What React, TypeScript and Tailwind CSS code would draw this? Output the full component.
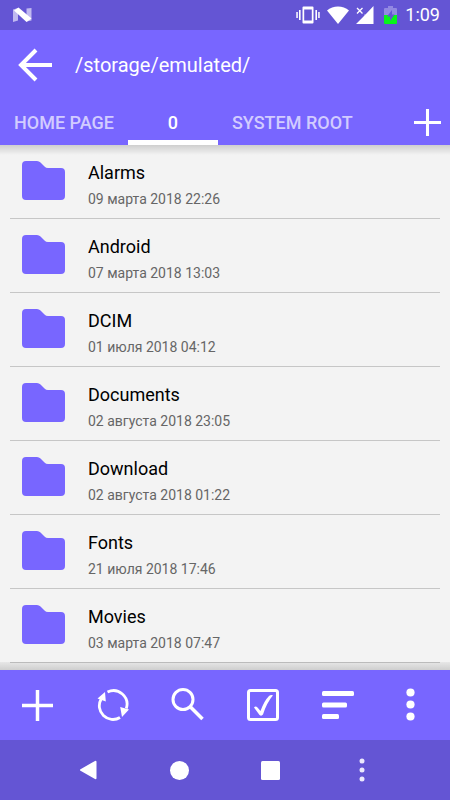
import type { ReactNode } from "react";

const folders = [
  { name: "Alarms", date: "09 марта 2018 22:26" },
  { name: "Android", date: "07 марта 2018 13:03" },
  { name: "DCIM", date: "01 июля 2018 04:12" },
  { name: "Documents", date: "02 августа 2018 23:05" },
  { name: "Download", date: "02 августа 2018 01:22" },
  { name: "Fonts", date: "21 июля 2018 17:46" },
  { name: "Movies", date: "03 марта 2018 07:47" },
];

function StatusBar() {
  return (
    <div className="flex h-[30px] shrink-0 items-center bg-[#6455d4] pr-[10px] pl-[13px] text-white">
      <svg width="19" height="16" viewBox="0 0 19 16">
        <path d="M0 2.500L5 1v12.500L0 15zM13.500 1.500L18.500 1v12.500l-5 1z" fill="#c0b9f0" />
        <path d="M1 3.500L5.500.5 18.500 11.500 13.500 15z" fill="#fff" />
      </svg>
      <div className="ml-auto flex items-center">
        <svg width="24" height="18" viewBox="0 0 24 18" fill="#fff">
          <path d="M7.500 .5h9a1 1 0 0 1 1 1v15a1 1 0 0 1-1 1h-9a1 1 0 0 1-1-1v-15a1 1 0 0 1 1-1zM8.200 3.500v11h7.600v-11z" fillRule="evenodd" />
          <path d="M3 4h1.600v10H3zM0.300 6h1.500v6H0.300zM19.400 4H21v10h-1.600zM22.200 6h1.500v6h-1.500z" />
        </svg>
        <svg className="ml-[6px]" width="24" height="18" viewBox="0 0 24 18">
          <path d="M1 4.500C7-.8 17-.8 23 4.500L12 18z" fill="#fff" />
        </svg>
        <svg className="ml-[6px]" width="18" height="18" viewBox="0 0 18 18">
          <path d="M17.500 0v18H0l8.500-8.500V8.500h1z" fill="#fff" />
          <path d="M1 2l5.500 5.500M6.500 2L1 7.500" stroke="#fff" strokeWidth="1.300" />
        </svg>
        <svg className="ml-[10px]" width="13" height="18" viewBox="0 0 13 18">
          <path d="M4 0h5v2h3a1 1 0 0 1 1 1v7H0V3a1 1 0 0 1 1-1h3z" fill="#9288e2" />
          <path d="M0 9h13v8a1 1 0 0 1-1 1H1a1 1 0 0 1-1-1z" fill="#08f51c" />
          <path d="M8 4L3 10.500h3V15l4.500-6.500H8z" fill="#6455d4" />
        </svg>
        <span className="ml-[8px] text-[18px] leading-[30px]">1:09</span>
      </div>
    </div>
  );
}

function PlusIcon({ size }: { size: number }) {
  return (
    <svg width={size} height={size} viewBox="0 0 32 32">
      <path d="M16 0v32M0 16h32" stroke="#fff" strokeWidth="3.600" />
    </svg>
  );
}

function FolderIcon() {
  return (
    <svg className="shrink-0" width="43" height="39" viewBox="0 0 43 39">
      <path
        d="M4 0h11q2 0 3.500 1.500l4 4Q24 7 26 7h13q4 0 4 4v24q0 4-4 4H4q-4 0-4-4V4Q0 0 4 0z"
        fill="#7866ff"
      />
    </svg>
  );
}

function Tab({ label, active = false }: { label: string; active?: boolean }) {
  return (
    <button
      role="tab"
      aria-selected={active}
      className={
        active
          ? "min-w-[90px] border-b-[5px] border-white px-[14px] pt-[5px] text-white"
          : "border-b-[5px] border-transparent px-[14px] pt-[5px] text-[#d2ccff]"
      }
    >
      {label}
    </button>
  );
}

function ToolButton({ label, children }: { label: string; children: ReactNode }) {
  return (
    <button aria-label={label} className="flex items-center justify-center">
      {children}
    </button>
  );
}

export default function App() {
  return (
    <div className="flex h-screen flex-col bg-[#f3f3f3] font-[Roboto,sans-serif]">
      <StatusBar />

      <header className="shrink-0 bg-[#7866ff]">
        <div className="flex h-[70px] items-center pl-[18px]">
          <button aria-label="Back">
            <svg width="34" height="34" viewBox="0 0 34 34" fill="none" stroke="#fff" strokeWidth="4">
              <path d="M18 2L3 17l15 15M3 17h31" />
            </svg>
          </button>
          <h1 className="ml-[23px] text-[20px] leading-[24px] text-white">/storage/emulated/</h1>
        </div>
        <div className="flex h-[45px] text-[18px] font-medium">
          <div role="tablist" className="flex">
            <Tab label="HOME PAGE" />
            <Tab label="0" active />
            <Tab label="SYSTEM ROOT" />
          </div>
          <button aria-label="Add tab" className="ml-auto pr-[9px]">
            <PlusIcon size={27} />
          </button>
        </div>
      </header>

      <main className="relative min-h-0 flex-1">
        <div className="pointer-events-none absolute inset-x-0 top-0 h-[10px] bg-linear-to-b from-black/15 to-transparent" />
        <ul className="h-full overflow-y-auto px-[10px]">
          {folders.map((folder) => (
            <li key={folder.name} className="border-b border-[#c6c6c6]">
              <a href="#" className="flex h-[73px] items-start pt-[16px] pl-[12px]">
                <FolderIcon />
                <div className="ml-[23px]">
                  <p className="text-[18px] leading-[24px] text-black">{folder.name}</p>
                  <p className="mt-[4px] text-[14px] leading-[20px] text-[#666]">{folder.date}</p>
                </div>
              </a>
            </li>
          ))}
        </ul>
        <div className="pointer-events-none absolute inset-x-0 bottom-0 h-[8px] bg-linear-to-t from-black/15 to-black/5" />
      </main>

      <div className="grid h-[70px] shrink-0 grid-cols-6 bg-[#7866ff]">
        <ToolButton label="New">
          <PlusIcon size={31} />
        </ToolButton>
        <ToolButton label="Refresh">
          <svg width="32" height="32" viewBox="0 0 32 32">
            <g fill="none" stroke="#fff" strokeWidth="2.800">
              <path d="M10.500 3A13.600 13.600 0 0 1 29.300 19.500" />
              <path d="M23 28.500A13.600 13.600 0 0 1 4.200 10" />
            </g>
            <path d="M.5 9.500L8 3l.8 9.500zM32 20.500L25 28l-1.800-10z" fill="#fff" />
          </svg>
        </ToolButton>
        <ToolButton label="Search">
          <svg width="34" height="34" viewBox="0 0 34 34" fill="none" stroke="#fff">
            <circle cx="12" cy="11.500" r="10" strokeWidth="3" />
            <path d="M19 18.500L31.500 31" strokeWidth="3.500" />
          </svg>
        </ToolButton>
        <ToolButton label="Select">
          <svg width="32" height="32" viewBox="0 0 32 32">
            <rect x="1.500" y="1.500" width="29" height="29" rx="2" fill="none" stroke="#fff" strokeWidth="3" />
            <path
              d="M7 18.500q1.500-2 3.500 0l3 3.500Q17 12 22 7q1.500-1.500 4-.8Q19.500 14 16 25.500q-1.500 2-3.500 .5z"
              fill="#fff"
            />
          </svg>
        </ToolButton>
        <ToolButton label="Sort">
          <svg width="32" height="28" viewBox="0 0 32 28" fill="#fff">
            <rect width="32" height="5" rx="1.500" />
            <rect y="11.500" width="25" height="5" rx="1.500" />
            <rect y="23" width="17" height="5" rx="1.500" />
          </svg>
        </ToolButton>
        <ToolButton label="More">
          <svg width="14" height="34" viewBox="0 0 14 34" fill="#fff">
            <circle cx="4.500" cy="4.500" r="4.100" />
            <circle cx="4.500" cy="16.500" r="4.100" />
            <circle cx="4.500" cy="28.500" r="4.100" />
          </svg>
        </ToolButton>
      </div>

      <nav className="grid h-[60px] shrink-0 grid-cols-4 bg-[#6455d4] px-[43px]">
        <ToolButton label="System back">
          <svg width="20" height="20" viewBox="0 0 20 20">
            <path d="M2 10L16.500 1.800v16.400z" fill="#fff" stroke="#fff" strokeWidth="2" strokeLinejoin="round" />
          </svg>
        </ToolButton>
        <ToolButton label="System home">
          <svg width="19" height="19" viewBox="0 0 19 19">
            <circle cx="9.500" cy="9.500" r="9.500" fill="#fff" />
          </svg>
        </ToolButton>
        <ToolButton label="Recent apps">
          <svg width="19" height="19" viewBox="0 0 19 19">
            <rect width="19" height="19" rx="1.500" fill="#fff" />
          </svg>
        </ToolButton>
        <ToolButton label="Menu">
          <svg width="6" height="24" viewBox="0 0 6 24" fill="#ece9fd">
            <circle cx="3" cy="3" r="2.500" />
            <circle cx="3" cy="12" r="2.500" />
            <circle cx="3" cy="21" r="2.500" />
          </svg>
        </ToolButton>
      </nav>
    </div>
  );
}
